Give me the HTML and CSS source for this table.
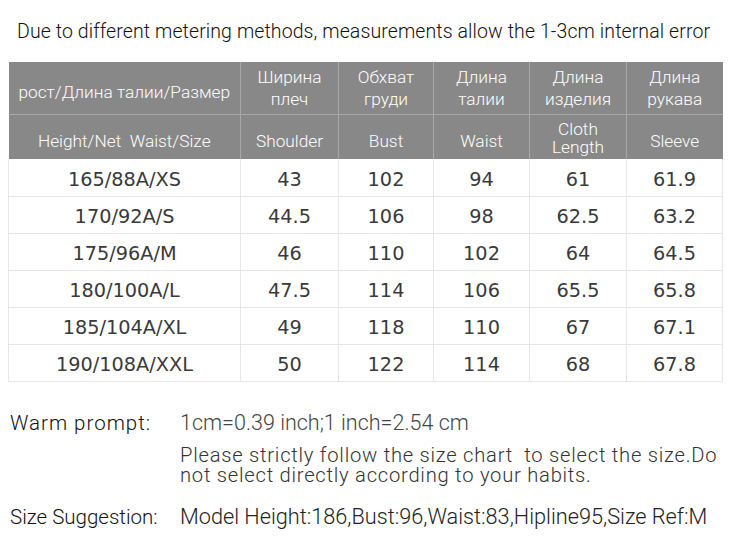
FILE: index.html
```html
<!DOCTYPE html>
<html>
<head>
<meta charset="utf-8">
<link rel="stylesheet" href="styles.css">
</head>
<body>
<div class="page">
  <p class="note">Due to different metering methods, measurements allow the 1-3cm internal error</p>
  <table class="chart">
    <colgroup>
      <col class="c-size"><col class="c-a"><col class="c-b"><col class="c-c"><col class="c-d"><col class="c-e">
    </colgroup>
    <thead>
      <tr class="h1">
        <th class="single">рост/Длина талии/Размер</th>
        <th>Ширина<br>плеч</th>
        <th>Обхват<br>груди</th>
        <th>Длина<br>талии</th>
        <th>Длина<br>изделия</th>
        <th>Длина<br>рукава</th>
      </tr>
      <tr class="h2">
        <th class="single">Height/Net&nbsp; Waist/Size</th>
        <th class="single">Shoulder</th>
        <th class="single">Bust</th>
        <th class="single">Waist</th>
        <th class="tight">Cloth<br>Length</th>
        <th class="single">Sleeve</th>
      </tr>
    </thead>
    <tbody>
      <tr><td>165/88A/XS</td><td>43</td><td>102</td><td>94</td><td>61</td><td>61.9</td></tr>
      <tr><td>170/92A/S</td><td>44.5</td><td>106</td><td>98</td><td>62.5</td><td>63.2</td></tr>
      <tr><td>175/96A/M</td><td>46</td><td>110</td><td>102</td><td>64</td><td>64.5</td></tr>
      <tr><td>180/100A/L</td><td>47.5</td><td>114</td><td>106</td><td>65.5</td><td>65.8</td></tr>
      <tr><td>185/104A/XL</td><td>49</td><td>118</td><td>110</td><td>67</td><td>67.1</td></tr>
      <tr><td>190/108A/XXL</td><td>50</td><td>122</td><td>114</td><td>68</td><td>67.8</td></tr>
    </tbody>
  </table>
  <div class="tips">
    <div class="tip">
      <span class="label wide">Warm prompt:</span>
      <div class="body">
        <p class="light">1cm=0.39 inch;1 inch=2.54 cm</p>
        <p class="para">Please strictly follow the size chart&nbsp; to select the size.Do not select directly according to your habits.</p>
      </div>
    </div>
    <div class="tip suggest">
      <span class="label">Size Suggestion:</span>
      <div class="body"><p>Model Height:186,Bust:96,Waist:83,Hipline95,Size Ref:M</p></div>
    </div>
  </div>
</div>
</body>
</html>
```
FILE: styles.css
```css
* { box-sizing: border-box; }
html, body { margin: 0; padding: 0; background: #fff; }
.page { width: 730px; height: 556px; overflow: hidden; font-family: Roboto, "Liberation Sans", sans-serif; }
.note {
  margin: 0;
  height: 62px;
  padding: 21px 0 0 17px;
  font-size: 19.5px;
  letter-spacing: 0.1px;
  font-weight: 300;
  line-height: 22px;
  color: #111;
  white-space: nowrap;
}
.chart {
  margin-left: 8px;
  width: 714px;
  border-collapse: collapse;
  table-layout: fixed;
}
.c-size { width: 232px; }
.c-a { width: 98px; }
.c-b { width: 95px; }
.c-c { width: 96px; }
.c-d { width: 97px; }
.c-e { width: 96px; }
.chart th {
  background: #888888;
  color: #fff;
  font-weight: 300;
  font-size: 17.3px;
  line-height: 22px;
  padding: 0;
  border-left: 1px solid #a8a8a8;
  text-align: center;
}
.chart th:first-child { border-left: none; }
.chart th.single { padding-top: 9px; }
.h1 th { height: 52px; border-bottom: 1px solid #a8a8a8; }
.h2 th { height: 45px; }
.h2 th.tight { line-height: 18px; padding-top: 3px; }
.chart td {
  height: 37px;
  padding: 4px 0 0;
  text-align: center;
  font-family: "DejaVu Sans", "Noto Sans", sans-serif;
  font-size: 19.3px;
  color: #3a3a3a;
  border: 1px solid #e6e6e6;
  border-top: none;
}
.tips { padding: 29px 0 0 10px; color: #333; }
.tip { display: flex; align-items: flex-start; }
.label { width: 170px; flex: none; font-size: 20.5px; font-weight: 300; line-height: 24px; color: #111; }
.label.wide { letter-spacing: 1px; }
.body p { margin: 0; font-size: 20.2px; font-weight: 300; line-height: 20px; color: #333; letter-spacing: 0.75px; }
.body .light { font-size: 21.5px; line-height: 24px; margin-bottom: 10px; color: #444; letter-spacing: 0; }
.body .para { width: 545px; }
.suggest { margin-top: 20px; }
.suggest .body p { font-size: 21.7px; line-height: 24px; color: #222; letter-spacing: 0; }
```
